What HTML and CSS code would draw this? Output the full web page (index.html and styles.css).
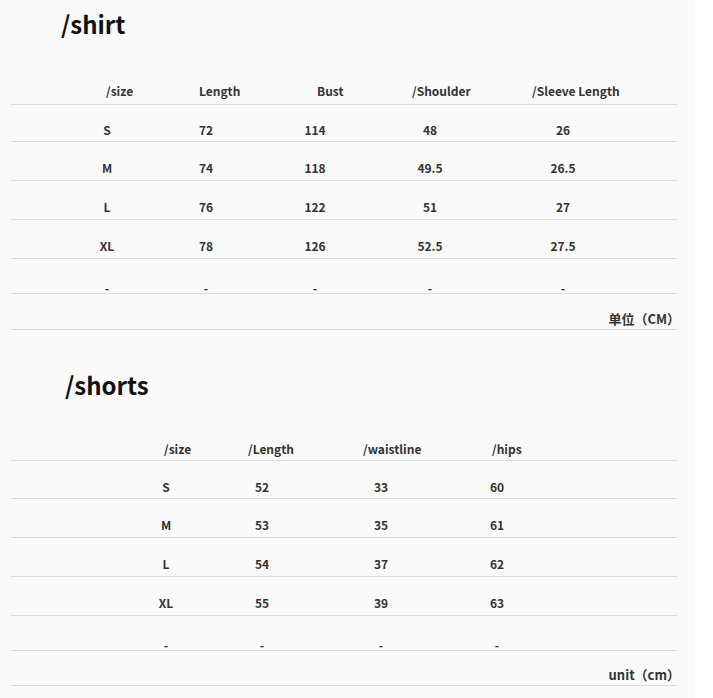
FILE: index.html
```html
<!DOCTYPE html>
<html lang="zh">
<head>
<meta charset="utf-8">
<title>Size chart</title>
<link rel="stylesheet" href="styles.css">
</head>
<body>
<div class="page">
  <section class="chart chart-shirt">
    <h2 class="chart-title">/shirt</h2>
    <div class="table">
      <div class="row head"><div class="cell">/size</div><div class="cell">Length</div><div class="cell">Bust</div><div class="cell">/Shoulder</div><div class="cell">/Sleeve Length</div></div>
      <div class="row data first"><div class="cell">S</div><div class="cell">72</div><div class="cell">114</div><div class="cell">48</div><div class="cell">26</div></div>
      <div class="row data"><div class="cell">M</div><div class="cell">74</div><div class="cell">118</div><div class="cell">49.5</div><div class="cell">26.5</div></div>
      <div class="row data"><div class="cell">L</div><div class="cell">76</div><div class="cell">122</div><div class="cell">51</div><div class="cell">27</div></div>
      <div class="row data"><div class="cell">XL</div><div class="cell">78</div><div class="cell">126</div><div class="cell">52.5</div><div class="cell">27.5</div></div>
      <div class="row dash"><div class="cell">-</div><div class="cell">-</div><div class="cell">-</div><div class="cell">-</div><div class="cell">-</div></div>
      <div class="unit"><span class="unit-label">单位（CM）</span></div>
    </div>
  </section>

  <section class="chart chart-shorts">
    <h2 class="chart-title">/shorts</h2>
    <div class="table">
      <div class="row head"><div class="cell">/size</div><div class="cell">/Length</div><div class="cell">/waistline</div><div class="cell">/hips</div></div>
      <div class="row data first"><div class="cell">S</div><div class="cell">52</div><div class="cell">33</div><div class="cell">60</div></div>
      <div class="row data"><div class="cell">M</div><div class="cell">53</div><div class="cell">35</div><div class="cell">61</div></div>
      <div class="row data"><div class="cell">L</div><div class="cell">54</div><div class="cell">37</div><div class="cell">62</div></div>
      <div class="row data"><div class="cell">XL</div><div class="cell">55</div><div class="cell">39</div><div class="cell">63</div></div>
      <div class="row dash"><div class="cell">-</div><div class="cell">-</div><div class="cell">-</div><div class="cell">-</div></div>
      <div class="unit"><span class="unit-label">unit（cm）</span></div>
    </div>
  </section>
</div>
</body>
</html>
```

FILE: styles.css
```css
* { box-sizing: border-box; }

html, body {
  margin: 0;
  padding: 0;
  background: #ffffff;
}

body {
  font-family: "Noto Sans CJK SC", "Noto Sans", sans-serif;
  color: #333333;
}

.page {
  width: 695px;
  height: 698px;
  background: #fafafa;
  overflow: hidden;
}

.chart-title {
  margin: 0;
  height: 36px;
  line-height: 36px;
  font-size: 24px;
  font-weight: 700;
  color: #111111;
}

.chart-shirt { padding-top: 6px; }
.chart-shirt .chart-title { padding-left: 61px; }

.chart-shorts { padding-top: 37px; }
.chart-shorts .chart-title { padding-left: 65px; }

.table {
  margin-left: 11px;
  width: 666px;
  font-size: 12px;
  font-weight: 700;
  line-height: 18px;
}

.row {
  display: grid;
  border-bottom: 1px solid #dddddd;
}

.chart-shirt .row {
  padding-left: 49px;
  grid-template-columns: 94px 104px 114px 116px 150px;
}

.chart-shorts .row {
  padding-left: 109px;
  grid-template-columns: 92px 100px 138px 94px;
}

.cell {
  text-align: center;
  white-space: nowrap;
}

.head .cell { text-align: left; }

.chart-shirt .head { padding-top: 40px; padding-bottom: 4px; }
.chart-shirt .head .cell:nth-child(1) { padding-left: 46px; }
.chart-shirt .head .cell:nth-child(2) { padding-left: 45px; }
.chart-shirt .head .cell:nth-child(3) { padding-left: 59px; }
.chart-shirt .head .cell:nth-child(4) { padding-left: 40px; }
.chart-shirt .head .cell:nth-child(5) { padding-left: 44px; }

.chart-shorts .head { padding-top: 37px; padding-bottom: 2px; }
.chart-shorts .head .cell:nth-child(1) { padding-left: 44px; }
.chart-shorts .head .cell:nth-child(2) { padding-left: 36px; }
.chart-shorts .head .cell:nth-child(3) { padding-left: 51px; }
.chart-shorts .head .cell:nth-child(4) { padding-left: 42px; }

.data {
  height: 39px;
  padding-top: 17px;
}

.data.first { height: 38px; }
.chart-shirt .data.first { height: 37px; padding-top: 16px; }

.dash {
  height: 35px;
  padding-top: 20px;
}

.unit {
  height: 35px;
  padding-top: 15px;
  text-align: right;
  border-bottom: 1px solid #dddddd;
  font-size: 13px;
}

.chart-shirt .unit { height: 36px; padding-top: 16px; }

.unit-label {
  display: inline-block;
  margin-right: -3px;
}
```
